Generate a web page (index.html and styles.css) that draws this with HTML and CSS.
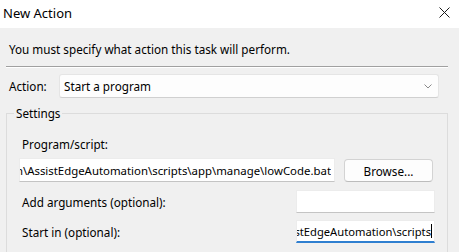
FILE: index.html
```html
<!DOCTYPE html>
<html lang="en">

<head>
    <meta charset="UTF-8">
    <title>New Action</title>
    <link rel="stylesheet" href="styles.css">
</head>

<body>
    <div class="window">
        <div class="titlebar">
            <span class="title">New Action</span>
            <svg class="close" width="11" height="11" viewBox="0 0 11 11">
                <path d="M0.5 0.5 L10.5 10.5 M10.5 0.5 L0.5 10.5" stroke="#1a1a1a" stroke-width="1" fill="none" />
            </svg>
        </div>

        <div class="content">
            <p class="prompt">You must specify what action this task will perform.</p>
            <div class="separator"></div>

            <div class="action-row">
                <span class="action-label">Action:</span>
                <div class="select">
                    <span>Start a program</span>
                    <svg width="8" height="5" viewBox="0 0 8 5">
                        <path d="M0.5 0.5 L4 4 L7.5 0.5" stroke="#8a8a8a" stroke-width="1" fill="none" />
                    </svg>
                </div>
            </div>

            <fieldset class="settings">
                <legend>Settings</legend>
                <div class="field-label">Program/script:</div>
                <div class="program-row">
                    <div class="textbox program">
                        <div class="textbox-text">
                            <span>C:\Users\admin\AssistEdgeAutomation\scripts\app\manage\lowCode.bat</span>
                        </div>
                    </div>
                    <button class="browse">Browse...</button>
                </div>
                <div class="option-row">
                    <span class="field-label">Add arguments (optional):</span>
                    <div class="textbox short"></div>
                </div>
                <div class="option-row start-row">
                    <span class="field-label">Start in (optional):</span>
                    <div class="textbox short focused">
                        <div class="textbox-text">
                            <span>C:\Users\admin\AssistEdgeAutomation\scripts</span>
                            <span class="caret"></span>
                        </div>
                    </div>
                </div>
            </fieldset>
        </div>
    </div>
</body>

</html>
```

FILE: styles.css
```css
body {
    margin: 0;
    font-family: "Noto Sans", "Liberation Sans", sans-serif;
    font-size: 11.7px;
    color: #000;
    background: #f0f0f0;
}

.window {
    width: 459px;
    height: 252px;
    overflow: hidden;
    background: #f0f0f0;
}

.titlebar {
    height: 28px;
    box-sizing: border-box;
    padding: 0 9px 3px 3px;
    background: #fff;
    display: flex;
    align-items: center;
    justify-content: space-between;
}

.title {
    font-size: 13px;
}

.content {
    padding: 12px 11px 0 6px;
}

.prompt {
    margin: 1px 0 0 3px;
    line-height: 16px;
}

.separator {
    margin-top: 9px;
    border-top: 1px solid #a0a0a0;
    border-bottom: 1px solid #fff;
}

.action-row {
    display: flex;
    align-items: center;
    margin: 6px 9px 0 3px;
}

.action-label {
    width: 50px;
}

.select {
    flex: 1;
    height: 24px;
    box-sizing: border-box;
    padding: 0 6px 0 4px;
    background: #fdfdfd;
    border: 1px solid #e5e5e5;
    border-bottom-color: #d0d0d0;
    border-radius: 3px;
    display: flex;
    align-items: center;
    justify-content: space-between;
}

.settings {
    margin: 7px 0 0;
    padding: 15px 12px 20px;
    border: 1px solid #dcdcdc;
    min-width: 0;
}

.settings legend {
    margin-left: -5px;
    padding: 0 2px;
    line-height: 16px;
}

.field-label {
    line-height: 16px;
    padding-left: 3px;
}

.program-row {
    display: flex;
    margin-top: 6px;
}

.textbox {
    height: 23px;
    box-sizing: border-box;
    background: #fff;
    border: 1px solid #ececec;
    border-bottom-color: #c4c4c4;
    display: flex;
    align-items: center;
    min-width: 0;
}

.textbox.program {
    flex: 1;
    height: 24px;
}

.textbox.short {
    width: 139px;
    flex-shrink: 0;
}

.textbox.focused {
    border-bottom: 2px solid #2f7fd0;
}

.textbox-text {
    flex: 1;
    min-width: 0;
    overflow: hidden;
    display: flex;
    justify-content: flex-end;
    align-items: center;
    white-space: nowrap;
    margin: 0 3px 0 0;
    font-size: 11.4px;
}

.textbox-text span {
    flex-shrink: 0;
}

.focused .textbox-text {
    margin-right: 2px;
    font-size: 11.2px;
}

.caret {
    width: 1px;
    height: 14px;
    background: #000;
}

.browse {
    width: 89px;
    height: 23px;
    flex-shrink: 0;
    margin: 1px 2px 0 9px;
    font: inherit;
    color: #000;
    background: #fdfdfd;
    border: 1px solid #d3d3d3;
    border-bottom-color: #bcbcbc;
    border-radius: 4px;
}

.option-row {
    display: flex;
    align-items: center;
    justify-content: space-between;
    margin-top: 8px;
}

.start-row {
    margin-top: 7px;
}
```
